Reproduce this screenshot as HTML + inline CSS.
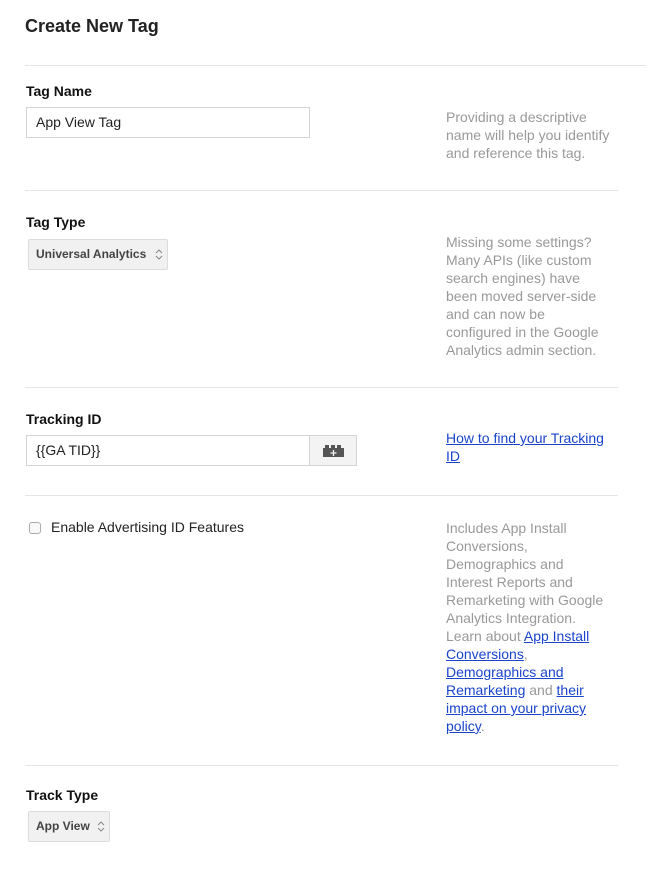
<!DOCTYPE html>
<html><head><meta charset="utf-8">
<style>
html,body{margin:0;padding:0;background:#fff;}
body{width:646px;height:869px;position:relative;overflow:hidden;font-family:"Liberation Sans",Arial,sans-serif;color:#222;}
.a{position:absolute;}
h1{position:absolute;left:25px;top:16px;margin:0;font-size:18px;font-weight:bold;color:#222;}
.hr{position:absolute;left:25px;height:1px;background:#e5e5e5;}
.lbl{position:absolute;left:26px;font-size:14px;font-weight:bold;color:#111;}
.help{position:absolute;left:446px;width:200px;font-size:14px;line-height:18px;color:#999;white-space:nowrap;}
.help a{color:#1a44cc;text-decoration:underline;}
.inp{position:absolute;left:26px;height:31px;border:1px solid #d4d4d4;box-sizing:border-box;font-size:14px;line-height:29px;padding-left:9px;color:#222;}
.sel{position:absolute;left:28px;height:31px;border:1px solid #dcdcdc;border-radius:2px;background:#f1f1f1;box-sizing:border-box;font-size:12px;font-weight:bold;color:#444;line-height:29px;padding-left:7px;}
.sel svg{position:absolute;right:4px;top:8px;}
</style></head><body>
<h1>Create New Tag</h1>
<div class="hr" style="top:65px;width:621px"></div>

<div class="lbl" style="top:83px">Tag Name</div>
<div class="inp" style="top:107px;width:284px">App View Tag</div>
<div class="help" style="top:108px">Providing a descriptive<br>name will help you identify<br>and reference this tag.</div>
<div class="hr" style="top:190px;width:593px"></div>

<div class="lbl" style="top:214px">Tag Type</div>
<div class="sel" style="top:239px;width:140px">Universal Analytics
<svg width="8" height="13" viewBox="0 0 8 13"><path d="M1 5 L4 2 L7 5 M1 8 L4 11 L7 8" fill="none" stroke="#888" stroke-width="1"/></svg></div>
<div class="help" style="top:233px">Missing some settings?<br>Many APIs (like custom<br>search engines) have<br>been moved server-side<br>and can now be<br>configured in the Google<br>Analytics admin section.</div>
<div class="hr" style="top:387px;width:593px"></div>

<div class="lbl" style="top:411px">Tracking ID</div>
<div class="inp" style="top:435px;width:284px">{{GA TID}}</div>
<div class="a" style="left:309px;top:435px;width:48px;height:31px;border:1px solid #d4d4d4;box-sizing:border-box;background:#f3f3f3">
<svg class="a" style="left:13px;top:9px" width="21" height="12" viewBox="0 0 21 12"><path d="M0 3 H2 V0 H6 V3 H8 V0 H12 V3 H14 V0 H18 V3 H21 V12 H0 Z" fill="#555"/><path d="M10.5 5 V11 M7.5 8 H13.5" stroke="#f3f3f3" stroke-width="1.3"/></svg></div>
<div class="help" style="top:429px"><a>How to find your Tracking</a><br><a>ID</a></div>
<div class="hr" style="top:495px;width:593px"></div>

<div class="a" style="left:29px;top:522px;width:12px;height:12px;border:1px solid #aaa;border-radius:3px;box-sizing:border-box;background:#f8f8f8"></div>
<div class="a" style="left:51px;top:519px;font-size:14px;color:#222">Enable Advertising ID Features</div>
<div class="help" style="top:519px">Includes App Install<br>Conversions,<br>Demographics and<br>Interest Reports and<br>Remarketing with Google<br>Analytics Integration.<br>Learn about <a>App Install</a><br><a>Conversions</a>,<br><a>Demographics and</a><br><a>Remarketing</a> and <a>their</a><br><a>impact on your privacy</a><br><a>policy</a>.</div>
<div class="hr" style="top:765px;width:593px"></div>

<div class="lbl" style="top:787px">Track Type</div>
<div class="sel" style="top:811px;width:82px">App View
<svg width="8" height="13" viewBox="0 0 8 13"><path d="M1 5 L4 2 L7 5 M1 8 L4 11 L7 8" fill="none" stroke="#888" stroke-width="1"/></svg></div>
</body></html>
